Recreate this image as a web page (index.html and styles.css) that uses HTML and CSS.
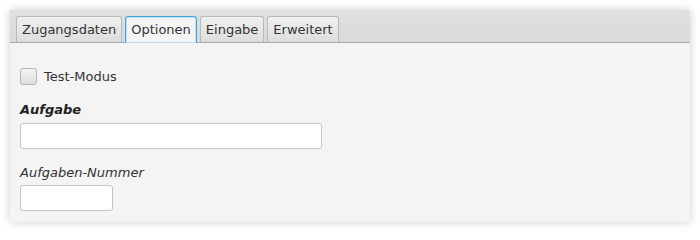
FILE: index.html
```html
<!DOCTYPE html>
<html>
<head>
<meta charset="utf-8">
<link rel="stylesheet" href="styles.css">
</head>
<body>
<div class="window">
  <div class="tabbar">
    <div class="tab">Zugangsdaten</div>
    <div class="tab selected">Optionen</div>
    <div class="tab">Eingabe</div>
    <div class="tab">Erweitert</div>
  </div>
  <div class="content">
    <label class="check"><span class="box"></span><span>Test-Modus</span></label>
    <div class="label required">Aufgabe</div>
    <div class="input wide"></div>
    <div class="label optional">Aufgaben-Nummer</div>
    <div class="input narrow"></div>
  </div>
</div>
</body>
</html>
```
FILE: styles.css
```css
html, body { margin: 0; padding: 0; background: #ffffff; }
body {
  padding: 10px;
  font-family: "DejaVu Sans", sans-serif;
  font-size: 13px;
  color: #333333;
}
.window {
  width: 680px;
  height: 212px;
  background: #f4f4f4;
  box-shadow: 0 0 9px rgba(0,0,0,0.2);
  display: flex;
  flex-direction: column;
}
.tabbar {
  height: 33px;
  box-sizing: border-box;
  background: linear-gradient(#e0e0e0, #dadada);
  border-bottom: 1px solid #a9a9a9;
  display: flex;
  align-items: flex-end;
  gap: 3px;
  padding-left: 6px;
}
.tab {
  height: 26px;
  box-sizing: border-box;
  padding: 0 5px;
  line-height: 25px;
  border: 1px solid #b9b9b9;
  border-bottom: none;
  border-radius: 3px 3px 0 0;
  background: linear-gradient(#f0f0f0, #dddddd);
  color: #333333;
}
.tab.selected {
  background: #f4f4f4;
  border: 1px solid #44a6d8;
  border-bottom: none;
  box-shadow: inset 0 0 0 1px #bfe0f2;
  height: 27px;
  margin-bottom: -1px;
}
.content {
  padding: 24px 10px 0 10px;
  display: flex;
  flex-direction: column;
  align-items: flex-start;
}
.check {
  display: flex;
  align-items: center;
  gap: 7px;
  height: 18px;
}
.box {
  width: 17px;
  height: 17px;
  box-sizing: border-box;
  border: 1px solid #b5b5b5;
  border-radius: 3px;
  background: linear-gradient(#f3f3f3, #dedede);
}
.label {
  margin-top: 17px;
  line-height: 16px;
}
.label.required { font-weight: bold; font-style: italic; color: #222; }
.label.optional { font-style: italic; margin-top: 16px; }
.input {
  margin-top: 5px;
  height: 26px;
  box-sizing: border-box;
  background: #ffffff;
  border: 1px solid #c4c4c4;
  border-radius: 3px;
}
.input.wide { width: 302px; }
.input.narrow { width: 93px; margin-top: 4px; }
```
